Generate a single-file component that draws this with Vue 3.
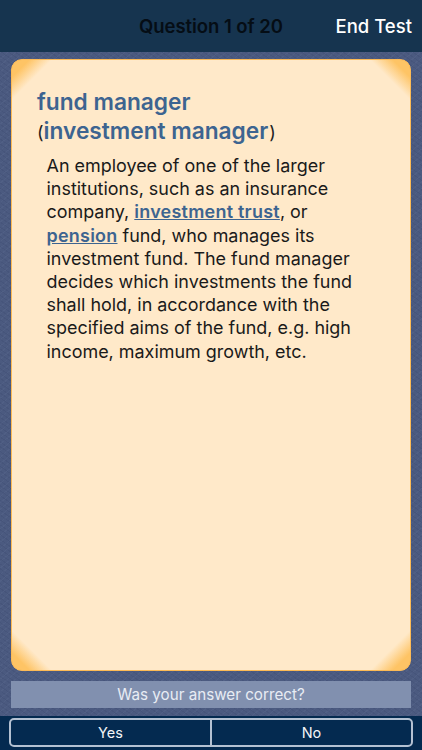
<script setup>
const paragraph = [
  { t: 'An employee of one of the larger institutions, such as an insurance company, ' },
  { t: 'investment trust', link: true },
  { t: ', or ' },
  { t: 'pension', link: true },
  { t: ' fund, who manages its investment fund. The fund manager decides which investments the fund shall hold, in accordance with the specified aims of the fund, e.g. high income, maximum growth, etc.' },
]
</script>

<template>
  <div class="screen">
    <header class="top">
      <div class="title">Question 1 of 20</div>
      <div class="end">End Test</div>
    </header>
    <main class="middle">
      <section class="card">
        <h1 class="term">fund manager</h1>
        <h2 class="alt"><span class="paren">(</span>investment manager<span class="paren close">)</span></h2>
        <p class="def"><template v-for="(p, i) in paragraph" :key="i"><a v-if="p.link" class="link">{{ p.t }}</a><template v-else>{{ p.t }}</template></template></p>
      </section>
      <div class="prompt">Was your answer correct?</div>
    </main>
    <footer class="bottom">
      <div class="seg">
        <div class="btn first">Yes</div>
        <div class="btn">No</div>
      </div>
    </footer>
  </div>
</template>

<style>
html, body { margin: 0; padding: 0; }
</style>

<style scoped>
.screen {
  width: 422px;
  height: 750px;
  display: flex;
  flex-direction: column;
  overflow: hidden;
  font-family: Inter, "Liberation Sans", sans-serif;
  background-color: #4b5a80;
  background-image:
    repeating-linear-gradient(35deg, rgba(30, 40, 80, 0.1) 0 1px, transparent 1px 4px),
    repeating-linear-gradient(-40deg, rgba(150, 165, 200, 0.07) 0 1px, transparent 1px 5px);
}
.top {
  height: 52px;
  flex: none;
  background: #16344f;
  position: relative;
  display: flex;
  align-items: center;
  justify-content: flex-end;
  padding-right: 10px;
}
.title {
  position: absolute;
  left: 0;
  right: 0;
  text-align: center;
  font-size: 18.5px;
  font-weight: 600;
  letter-spacing: -0.05px;
  color: #050d15;
}
.end {
  position: relative;
  font-size: 18.5px;
  font-weight: 500;
  color: #fff;
}
.middle {
  flex: 1;
  display: flex;
  flex-direction: column;
  padding: 7px 11px 8px;
  gap: 10px;
  min-height: 0;
}
.card {
  flex: 1;
  box-sizing: border-box;
  border-radius: 11px;
  border: 1.5px solid #fdba55;
  padding: 27px 26px 0 25px;
  background-color: #ffe9c9;
  background-image:
    linear-gradient(135deg, #fec465 0, #fec465 12px, rgba(255, 233, 201, 0) 28px),
    linear-gradient(225deg, #fec465 0, #fec465 12px, rgba(255, 233, 201, 0) 28px),
    linear-gradient(45deg, #fec465 0, #fec465 12px, rgba(255, 233, 201, 0) 28px),
    linear-gradient(315deg, #fec465 0, #fec465 12px, rgba(255, 233, 201, 0) 28px);
}
.term, .alt {
  margin: 0;
  font-size: 22.7px;
  line-height: 29px;
  font-weight: 600;
  color: #3d6490;
}
.paren {
  font-weight: 400;
  font-size: 18px;
  color: #222;
}
.close {
  margin-left: 1px;
}
.def {
  margin: 7px 0 0 9.5px;
  font-size: 17.95px;
  line-height: 23.2px;
  color: #1a1a1a;
  width: 320px;
}
.link {
  color: #3d6490;
  font-weight: 600;
  letter-spacing: 0.25px;
  text-decoration: underline;
}
.prompt {
  flex: none;
  height: 27px;
  line-height: 28px;
  text-align: center;
  font-size: 15.2px;
  color: #e8ecf4;
  background: #8190af;
}
.bottom {
  flex: none;
  height: 34px;
  background: #042a50;
  box-sizing: border-box;
  padding: 2px 9px 3px;
}
.seg {
  height: 29px;
  display: flex;
  box-sizing: border-box;
  border: 2px solid #b4c1d2;
  border-radius: 5px;
}
.btn {
  flex: 1;
  text-align: center;
  line-height: 25px;
  font-size: 14.5px;
  color: #f2f5f8;
}
.first {
  border-right: 2px solid #b4c1d2;
}
</style>
